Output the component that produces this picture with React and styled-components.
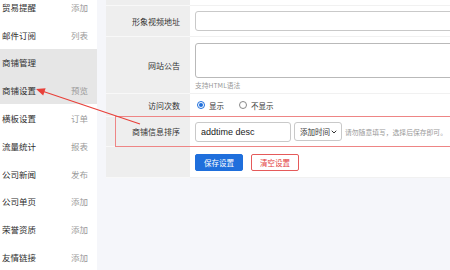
import React from "react";
import styled, { createGlobalStyle } from "styled-components";
import { ChevronDown } from "lucide-react";

const GlobalStyle = createGlobalStyle`
  html, body {
    margin: 0;
    padding: 0;
    background: #f5f6fa;
    font-family: "Noto Sans CJK SC", "Noto Sans", sans-serif;
    overflow: hidden;
  }
`;

const Page = styled.div`
  position: relative;
  display: flex;
  width: 450px;
  height: 270px;
  overflow: hidden;
`;

const Sidebar = styled.aside`
  width: 97px;
  flex-shrink: 0;
  background: #fff;
  overflow: hidden;
`;

const MenuList = styled.ul`
  list-style: none;
  margin: -7px 0 0;
  padding: 0;
`;

const MenuItem = styled.li`
  display: flex;
  align-items: center;
  justify-content: space-between;
  height: 27.8px;
  padding: 0 9px 0 2px;
  font-size: 8.5px;
  color: #2e2e2e;
  background: ${p => (p.$active || p.$header ? "#e6e6e6" : "#fff")};
`;

const Action = styled.span`
  color: #9a9a9a;
`;

const Main = styled.main`
  flex: 1;
  padding-left: 9px;
  overflow: hidden;
`;

const Table = styled.div`
  margin-top: -25px;
  width: 360px;
  background: #fff;
`;

const Row = styled.div`
  position: relative;
  display: flex;
  height: ${p => p.$h}px;
  border-bottom: 1px solid #f1f1f1;
`;

const Label = styled.div`
  width: 84px;
  flex-shrink: 0;
  display: flex;
  align-items: center;
  justify-content: flex-end;
  padding-right: 10px;
  box-sizing: border-box;
  background: #eeeeee;
  border-bottom: 1px solid #f8f8f8;
  margin-bottom: -1px;
  font-size: 8px;
  color: #333;
`;

const Value = styled.div`
  flex: 1;
  display: flex;
  flex-direction: ${p => (p.$column ? "column" : "row")};
  align-items: ${p => (p.$column ? "stretch" : "center")};
  gap: ${p => p.$gap || 0}px;
  padding: ${p => (p.$column ? "6px 0 0 5px" : "0 0 0 5px")};
`;

const TextInput = styled.div`
  box-sizing: border-box;
  height: 20px;
  width: ${p => (p.$w ? `${p.$w}px` : "100%")};
  border: 1px solid #c9c9c9;
  border-radius: 3px;
  background: #fff;
  display: flex;
  align-items: center;
  padding-left: 5px;
  font-family: "Liberation Sans", Arial, sans-serif;
  font-size: 9px;
  color: #222;
`;

const TextArea = styled.div`
  box-sizing: border-box;
  height: 35px;
  border: 1px solid #b9b9b9;
  border-radius: 3px;
  background: #fff;
`;

const Hint = styled.span`
  font-size: 6.8px;
  color: #999;
  white-space: nowrap;
  margin-top: ${p => p.$mt || 0}px;
`;

const RadioGroup = styled.label`
  display: flex;
  align-items: center;
  gap: 4px;
  font-size: 7.5px;
  color: #333;
  margin-right: 13px;
`;

const Radio = styled.span`
  box-sizing: border-box;
  width: 8px;
  height: 8px;
  border-radius: 50%;
  border: 1px solid ${p => (p.$checked ? "#1f6fdc" : "#888")};
  display: flex;
  align-items: center;
  justify-content: center;
  margin-left: 2px;
  &::after {
    content: "";
    width: 4px;
    height: 4px;
    border-radius: 50%;
    background: ${p => (p.$checked ? "#1f6fdc" : "transparent")};
  }
`;

const Select = styled.div`
  box-sizing: border-box;
  height: 19px;
  width: 48px;
  border: 1px solid #c9c9c9;
  border-radius: 3px;
  display: flex;
  align-items: center;
  justify-content: space-between;
  padding: 0 3px 0 5px;
  font-size: 7.5px;
  color: #333;
`;

const Button = styled.button`
  box-sizing: border-box;
  height: 17px;
  width: 48px;
  padding: 0;
  border-radius: 2px;
  font-family: inherit;
  font-size: 7.5px;
  border: 1px solid ${p => (p.$danger ? "#e55a5a" : "#1f6fdc")};
  background: ${p => (p.$danger ? "#fff" : "#1f6fdc")};
  color: ${p => (p.$danger ? "#e23b3b" : "#fff")};
`;

const Highlight = styled.div`
  position: absolute;
  left: 9px;
  right: -20px;
  top: -1px;
  bottom: -1px;
  border: 1px solid #ee8585;
  pointer-events: none;
`;

const Annotation = styled.svg`
  position: absolute;
  left: 0;
  top: 0;
  pointer-events: none;
`;

const menu = [
  { name: "贸易提醒", action: "添加" },
  { name: "邮件订阅", action: "列表" },
  { name: "商铺管理", header: true },
  { name: "商铺设置", action: "预览", active: true },
  { name: "横板设置", action: "订单" },
  { name: "流量统计", action: "报表" },
  { name: "公司新闻", action: "发布" },
  { name: "公司单页", action: "添加" },
  { name: "荣誉资质", action: "添加" },
  { name: "友情链接", action: "添加" }
];

const App = () => {
  return (
    <Page>
      <GlobalStyle />
      <Sidebar>
        <MenuList>
          {menu.map(item => (
            <MenuItem key={item.name} $header={item.header} $active={item.active}>
              <span>{item.name}</span>
              {item.action && <Action>{item.action}</Action>}
            </MenuItem>
          ))}
        </MenuList>
      </Sidebar>
      <Main>
        <Table>
          <Row $h={30}>
            <Label />
            <Value>
              <TextInput />
            </Value>
          </Row>
          <Row $h={30}>
            <Label>形象视频地址</Label>
            <Value>
              <TextInput />
            </Value>
          </Row>
          <Row $h={56}>
            <Label>网站公告</Label>
            <Value $column>
              <TextArea />
              <Hint $mt={2}>支持HTML语法</Hint>
            </Value>
          </Row>
          <Row $h={22}>
            <Label>访问次数</Label>
            <Value>
              <RadioGroup>
                <Radio $checked />
                显示
              </RadioGroup>
              <RadioGroup>
                <Radio />
                不显示
              </RadioGroup>
            </Value>
          </Row>
          <Row $h={29}>
            <Label>商铺信息排序</Label>
            <Value $gap={3}>
              <TextInput $w={96}>addtime desc</TextInput>
              <Select>
                添加时间
                <ChevronDown size={8} strokeWidth={3} color="#333" />
              </Select>
              <Hint>请勿随意填写，选择后保存即可。</Hint>
            </Value>
            <Highlight />
          </Row>
          <Row $h={30}>
            <Label />
            <Value $gap={8}>
              <Button>保存设置</Button>
              <Button $danger>清空设置</Button>
            </Value>
          </Row>
        </Table>
      </Main>
      <Annotation width="450" height="270" viewBox="0 0 450 270">
        <line x1="140" y1="124" x2="42" y2="91" stroke="#e8413a" strokeWidth="1.2" />
        <polygon points="36,89 45.6,88.2 43.2,95.4" fill="#e8413a" />
      </Annotation>
    </Page>
  );
};

export default App;
